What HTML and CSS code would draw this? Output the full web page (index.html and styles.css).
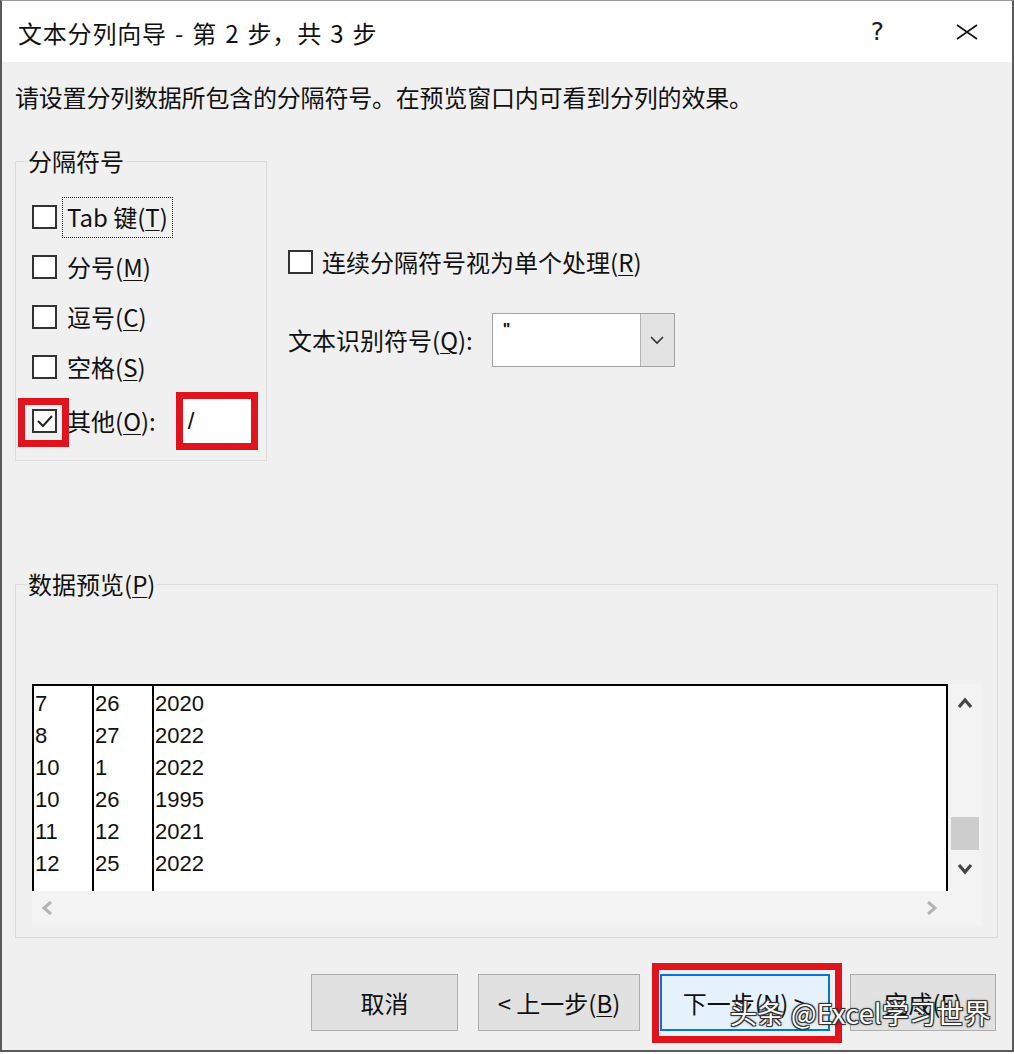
FILE: index.html
```html
<!DOCTYPE html>
<html lang="zh-CN">

<head>
    <meta charset="UTF-8">
    <title>文本分列向导 - 第 2 步，共 3 步</title>
    <link rel="stylesheet" href="styles.css">
</head>

<body>

    <div class="window">
        <div class="titlebar">
            <span class="title">文本分列向导 - 第 2 步，共 3 步</span>
            <div class="title-btns">
                <span class="help">?</span>
                <svg class="close" width="22" height="16" viewBox="0 0 22 16">
                    <path d="M1 1 L21 15 M21 1 L1 15" stroke="#111" stroke-width="1.6" fill="none" />
                </svg>
            </div>
        </div>

        <div class="content">
            <p class="hint">请设置分列数据所包含的分隔符号。在预览窗口内可看到分列的效果。</p>

            <div class="top-row">
                <div class="group delims">
                    <div class="group-title">分隔符号</div>
                    <div class="check-row">
                        <span class="box"></span>
                        <span class="label focus">Tab 键(<u>T</u>)</span>
                    </div>
                    <div class="check-row">
                        <span class="box"></span>
                        <span class="label">分号(<u>M</u>)</span>
                    </div>
                    <div class="check-row">
                        <span class="box"></span>
                        <span class="label">逗号(<u>C</u>)</span>
                    </div>
                    <div class="check-row">
                        <span class="box"></span>
                        <span class="label">空格(<u>S</u>)</span>
                    </div>
                    <div class="check-row other">
                        <span class="box checked">
                            <svg width="21" height="20" viewBox="0 0 21 20">
                                <path d="M4 10 L9 15 L18 5" stroke="#222" stroke-width="2" fill="none" />
                            </svg>
                            <span class="mark"></span>
                        </span>
                        <span class="label">其他(<u>O</u>):</span>
                        <span class="other-input">/</span>
                    </div>
                </div>

                <div class="options">
                    <div class="check-row single">
                        <span class="box"></span>
                        <span class="label">连续分隔符号视为单个处理(<u>R</u>)</span>
                    </div>
                    <div class="qualifier">
                        <span class="label">文本识别符号(<u>Q</u>):</span>
                        <div class="combo">
                            <span class="combo-value">"</span>
                            <span class="combo-btn">
                                <svg width="16" height="10" viewBox="0 0 16 10">
                                    <path d="M2 2 L8 8 L14 2" stroke="#333" stroke-width="1.6" fill="none" />
                                </svg>
                            </span>
                        </div>
                    </div>
                </div>
            </div>

            <div class="group preview">
                <div class="group-title">数据预览(<u>P</u>)</div>
                <div class="preview-box">
                    <div class="grid">
                        <div class="col c1">
                            <div>7</div><div>8</div><div>10</div><div>10</div><div>11</div><div>12</div>
                        </div>
                        <div class="col c2">
                            <div>26</div><div>27</div><div>1</div><div>26</div><div>12</div><div>25</div>
                        </div>
                        <div class="col c3">
                            <div>2020</div><div>2022</div><div>2022</div><div>1995</div><div>2021</div><div>2022</div>
                        </div>
                    </div>
                    <div class="vscroll">
                        <svg width="16" height="12" viewBox="0 0 16 12">
                            <path d="M2 10 L8 3 L14 10" stroke="#444" stroke-width="3.2" fill="none" />
                        </svg>
                        <span class="thumb"></span>
                        <svg width="16" height="12" viewBox="0 0 16 12">
                            <path d="M2 2 L8 9 L14 2" stroke="#444" stroke-width="3.2" fill="none" />
                        </svg>
                    </div>
                    <div class="hscroll">
                        <svg width="12" height="16" viewBox="0 0 12 16">
                            <path d="M10 2 L3 8 L10 14" stroke="#b4b4b4" stroke-width="3" fill="none" />
                        </svg>
                        <svg width="12" height="16" viewBox="0 0 12 16">
                            <path d="M2 2 L9 8 L2 14" stroke="#b4b4b4" stroke-width="3" fill="none" />
                        </svg>
                    </div>
                    <div class="corner"></div>
                </div>
            </div>

            <div class="buttons">
                <button class="btn b-cancel">取消</button>
                <button class="btn b-back">&lt; 上一步(<u>B</u>)</button>
                <button class="btn b-next default">下一步(<u>N</u>) &gt;<span class="mark"></span></button>
                <button class="btn b-finish">完成(<u>F</u>)</button>
            </div>
        </div>

        <div class="watermark">头条 @Excel学习世界</div>
    </div>

</body>

</html>
```

FILE: styles.css
```css
body {
    margin: 0;
    background-color: #ffffff;
    font-family: "Noto Sans CJK SC", "Noto Sans", sans-serif;
    color: #111;
}

.window {
    position: relative;
    box-sizing: border-box;
    width: 1014px;
    height: 1052px;
    border: 2px solid #5a5a5a;
    border-top: 1px solid #9a9a9a;
    background-color: #f0f0f0;
    overflow: hidden;
}

/* title bar */
.titlebar {
    height: 61px;
    background-color: #ffffff;
    display: flex;
    align-items: center;
    justify-content: space-between;
    padding: 0 34px 0 16px;
}

.title {
    font-size: 24px;
    line-height: 32px;
    margin-top: 2px;
    letter-spacing: 0.8px;
    word-spacing: 2px;
}

.title-btns {
    display: flex;
    align-items: center;
    gap: 72px;
}

.help {
    font-family: "DejaVu Sans", sans-serif;
    font-size: 25px;
    color: #222;
}

.close {
    display: block;
}

/* dialog body */
.content {
    padding: 0 14px 0 13px;
}

.hint {
    margin: 19px 0 0;
    font-size: 24px;
    line-height: 32px;
    letter-spacing: -0.2px;
}

u {
    text-decoration: underline;
    text-underline-offset: 3px;
    text-decoration-thickness: 1px;
}

.top-row {
    display: flex;
    align-items: flex-start;
    margin-top: 48px;
}

.group {
    border: 1px solid #dcdcdc;
}

.group-title {
    width: fit-content;
    margin: -17px 0 0 11px;
    padding: 0 1px;
    background-color: #f0f0f0;
    font-size: 24px;
    line-height: 32px;
}

.delims {
    width: 252px;
    box-sizing: border-box;
    padding: 0 0 10px 16px;
}

.delims .group-title {
    margin-left: -5px;
    margin-bottom: 15px;
}

.check-row {
    display: flex;
    align-items: center;
    height: 50px;
    font-size: 24px;
    line-height: 32px;
}

.check-row.other {
    height: 58px;
}

.box {
    position: relative;
    box-sizing: border-box;
    width: 25px;
    height: 24px;
    border: 2px solid #333;
    background-color: #ffffff;
    flex-shrink: 0;
}

.box svg {
    display: block;
}

.check-row .label {
    margin-left: 10px;
}

.check-row .label.focus {
    margin-left: 5px;
    border: 1px dotted #222;
    padding: 3px 4px 4px;
}

.mark {
    position: absolute;
    border: 7px solid #e0141e;
}

.box .mark {
    top: -13px;
    left: -16px;
    right: -14px;
    bottom: -16px;
}

.other-input {
    box-sizing: border-box;
    width: 82px;
    height: 58px;
    margin-left: 20px;
    border: 7px solid #e0141e;
    background-color: #ffffff;
    padding-left: 5px;
    font-family: "Liberation Sans", sans-serif;
    font-size: 24px;
    line-height: 44px;
}

/* right options */
.options {
    margin-left: 21px;
    padding-top: 85px;
}

.check-row.single {
    height: 32px;
}

.check-row.single .label {
    margin-left: 9px;
}

.qualifier {
    display: flex;
    align-items: center;
    margin-top: 35px;
    font-size: 24px;
    line-height: 32px;
}

.combo {
    box-sizing: border-box;
    display: flex;
    width: 183px;
    height: 54px;
    margin-left: 19px;
    border: 1px solid #a3a3a3;
    background-color: #ffffff;
}

.combo-value {
    flex: 1;
    padding: 8px 0 0 10px;
    font-family: "Liberation Sans", sans-serif;
    font-size: 16px;
    line-height: 16px;
    font-weight: bold;
}

.combo-btn {
    width: 33px;
    display: flex;
    align-items: center;
    justify-content: center;
    background-color: #e3e3e3;
    border-left: 1px solid #b4b4b4;
}

/* data preview */
.preview {
    margin-top: 123px;
    width: 983px;
    box-sizing: border-box;
    padding: 0 0 12px 16px;
}

.preview .group-title {
    margin-left: -5px;
    margin-bottom: 84px;
}

.preview-box {
    display: grid;
    grid-template-columns: 916px 34px;
    grid-template-rows: 207px 34px;
    width: 950px;
}

.grid {
    display: flex;
    background-color: #ffffff;
    border: 2px solid #000;
    border-bottom: none;
    border-left: none;
}

.col {
    box-sizing: border-box;
    width: 60px;
    border-left: 2px solid #000;
    padding: 2px 0 0 1px;
    font-family: "Liberation Sans", sans-serif;
    font-size: 22px;
    line-height: 32px;
}

.col.c3 {
    flex: 1;
}

.vscroll {
    display: flex;
    flex-direction: column;
    align-items: center;
    padding: 13px 0 9px;
    background-color: #f3f3f3;
}

.vscroll .thumb {
    width: 28px;
    height: 33px;
    margin: 108px 0 13px;
    background-color: #cdcdcd;
}

.hscroll {
    display: flex;
    align-items: center;
    justify-content: space-between;
    padding: 0 10px 0 9px;
    background-color: #f3f3f3;
}

.corner {
    background-color: #f3f3f3;
}

/* bottom buttons */
.buttons {
    display: flex;
    justify-content: flex-end;
    gap: 20px;
    margin: 36px 2px 0 0;
}

.btn {
    position: relative;
    height: 57px;
    box-sizing: border-box;
    background-color: #e1e1e1;
    border: 1px solid #adadad;
    font-family: "Noto Sans CJK SC", "Noto Sans", sans-serif;
    font-size: 24px;
    color: #111;
    padding: 0;
}

.b-cancel {
    width: 147px;
}

.b-back {
    width: 162px;
}

.b-next {
    width: 170px;
}

.b-finish {
    width: 146px;
}

.btn.default {
    background-color: #e5f1fb;
    border: 2px solid #0078d7;
}

.btn .mark {
    top: -13px;
    left: -10px;
    right: -14px;
    bottom: -14px;
}

.watermark {
    position: absolute;
    left: 728px;
    top: 994px;
    font-size: 27px;
    line-height: 36px;
    color: #ffffff;
    letter-spacing: 0.3px;
    text-shadow: 1px 1px 0 #333, -1px -1px 0 #333, 1px -1px 0 #333, -1px 1px 0 #333, 0 0 3px #000;
}
```
